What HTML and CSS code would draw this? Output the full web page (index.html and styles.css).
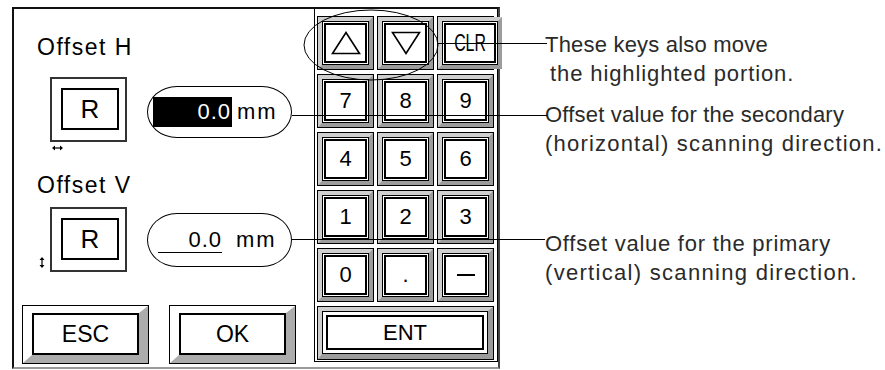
FILE: index.html
```html
<!DOCTYPE html>
<html lang="en">
<head>
  <meta charset="UTF-8" />
  <meta name="viewport" content="width=device-width, initial-scale=1.0"/>
  <title>Offset H / Offset V</title>
  <link rel="stylesheet" href="styles.css">
</head>
<body>
  <div class="figure">
    <div class="panel">
      <div class="settings">
        <div class="group group-h">
          <div class="label">Offset H</div>
          <div class="row">
            <div class="rbox">
              <span class="rface">R</span>
              <svg class="dir dir-h" width="11" height="6" viewBox="0 0 11 6">
                <path d="M2 3H9" stroke="#000" stroke-width="1.2"/>
                <path d="M0 3L3 0.5V5.5Z M11 3L8 0.5V5.5Z" fill="#000"/>
              </svg>
            </div>
            <div class="pill pill-h">
              <span class="field field-active">0.0</span>
              <span class="unit">mm</span>
            </div>
          </div>
        </div>
        <div class="group group-v">
          <div class="label">Offset V</div>
          <div class="row">
            <div class="rbox">
              <span class="rface">R</span>
              <svg class="dir dir-v" width="6" height="11" viewBox="0 0 6 11">
                <path d="M3 2V9" stroke="#000" stroke-width="1.2"/>
                <path d="M3 0L0.5 3H5.5Z M3 11L0.5 8H5.5Z" fill="#000"/>
              </svg>
            </div>
            <div class="pill pill-v">
              <span class="field field-under">0.0</span>
              <span class="unit unit-v">mm</span>
            </div>
          </div>
        </div>
        <div class="actions">
          <div class="btn"><div class="btn-bevel"><span class="btn-face">ESC</span></div></div>
          <div class="btn"><div class="btn-bevel"><span class="btn-face">OK</span></div></div>
        </div>
      </div>

      <div class="keypad">
        <div class="key"><div class="key-bevel"><span class="key-face">
          <svg width="30" height="24" viewBox="0 0 30 24"><polygon points="1.5,22.5 15,1.5 28.5,22.5" fill="none" stroke="#000" stroke-width="1.6"/></svg>
        </span></div></div>
        <div class="key"><div class="key-bevel"><span class="key-face">
          <svg width="30" height="24" viewBox="0 0 30 24"><polygon points="1.5,1.5 28.5,1.5 15,22.5" fill="none" stroke="#000" stroke-width="1.6"/></svg>
        </span></div></div>
        <div class="key"><div class="key-bevel"><span class="key-face"><span class="clr">CLR</span></span></div></div>
        <div class="key"><div class="key-bevel"><span class="key-face">7</span></div></div>
        <div class="key"><div class="key-bevel"><span class="key-face">8</span></div></div>
        <div class="key"><div class="key-bevel"><span class="key-face">9</span></div></div>
        <div class="key"><div class="key-bevel"><span class="key-face">4</span></div></div>
        <div class="key"><div class="key-bevel"><span class="key-face">5</span></div></div>
        <div class="key"><div class="key-bevel"><span class="key-face">6</span></div></div>
        <div class="key"><div class="key-bevel"><span class="key-face">1</span></div></div>
        <div class="key"><div class="key-bevel"><span class="key-face">2</span></div></div>
        <div class="key"><div class="key-bevel"><span class="key-face">3</span></div></div>
        <div class="key"><div class="key-bevel"><span class="key-face">0</span></div></div>
        <div class="key"><div class="key-bevel"><span class="key-face">.</span></div></div>
        <div class="key"><div class="key-bevel"><span class="key-face"><span class="minus"></span></span></div></div>
        <div class="key key-wide"><div class="key-bevel"><span class="key-face">ENT</span></div></div>
      </div>
    </div>

    <div class="notes">
      <p class="note note-keys">
        <span class="line ls-keys1">These keys also move</span>
        <span class="line ls-keys2 indent">the highlighted portion.</span>
      </p>
      <p class="note note-h">
        <span class="line ls-h1">Offset value for the secondary</span>
        <span class="line ls-h2">(horizontal) scanning direction.</span>
      </p>
      <p class="note note-v">
        <span class="line ls-v1">Offset value for the primary</span>
        <span class="line ls-v2">(vertical) scanning direction.</span>
      </p>
    </div>

    <!-- leader lines drawn over the panel -->
    <svg class="leaders" width="885" height="370" viewBox="0 0 885 370">
      <ellipse cx="371" cy="45" rx="67" ry="35" fill="none" stroke="#000" stroke-width="1"/>
      <g stroke="#000" stroke-width="1">
        <line x1="438" y1="43.5" x2="547" y2="43.5"/>
        <line x1="292" y1="115.5" x2="547" y2="115.5"/>
        <line x1="292" y1="239.5" x2="545" y2="239.5"/>
      </g>
    </svg>
  </div>
</body>
</html>
```

FILE: styles.css
```css
body {
  margin: 0;
  background: #fff;
  font-family: "Liberation Sans", Arial, sans-serif;
  color: #000;
}

.figure {
  position: relative;
  width: 885px;
  height: 370px;
  display: flex;
  align-items: flex-start;
}

.panel {
  margin: 7px 0 0 12px;
  width: 488px;
  height: 362px;
  box-sizing: border-box;
  border: 2px solid #111;
  border-bottom-color: #9a9a9a;
  border-right-color: #444;
  display: flex;
  align-items: flex-start;
}

.settings {
  width: 300px;
}

.group {
  padding-left: 23px;
}

.label {
  margin-top: 25px;
  font-size: 23px;
  line-height: 26px;
  letter-spacing: 1.5px;
}

.group-v .label {
  margin-top: 30px;
}

.row {
  display: flex;
  align-items: flex-start;
  margin: 17px 0 0 13px;
}

.group-v .row {
  margin-top: 9px;
}

.rbox {
  position: relative;
  width: 77px;
  height: 65px;
  box-sizing: border-box;
  border: 2px solid #333;
  padding: 9px 6px 10px 9px;
}

.rface {
  display: flex;
  align-items: center;
  justify-content: center;
  height: 100%;
  box-sizing: border-box;
  border: 2px solid #000;
  font-size: 26px;
}

.dir {
  position: absolute;
  display: block;
}

.dir-h {
  left: 0;
  top: 100%;
  margin-top: 5px;
}

.dir-v {
  right: 100%;
  bottom: 2px;
  margin-right: 7px;
}

.pill {
  margin-left: 20px;
  width: 145px;
  height: 52px;
  box-sizing: border-box;
  border: 1px solid #000;
  border-radius: 30px / 26px;
  display: flex;
  align-items: center;
  font-size: 22px;
}

.pill-h {
  margin-top: 9px;
}

.pill-v {
  margin-top: 6px;
  height: 54px;
  border-radius: 30px / 27px;
}

.field {
  box-sizing: border-box;
  text-align: right;
  letter-spacing: 1px;
}

.field-active {
  margin-left: 5px;
  width: 79px;
  height: 30px;
  line-height: 30px;
  padding-right: 1px;
  background: #000;
  color: #fff;
}

.field-under {
  margin-left: 10px;
  width: 64px;
  line-height: 24px;
  border-bottom: 1px solid #000;
}

.unit {
  margin-left: 5px;
  letter-spacing: 2px;
}

.unit-v {
  margin-left: 14px;
}

.actions {
  display: flex;
  gap: 20px;
  margin: 33px 0 0 8px;
}

.btn {
  width: 127px;
  height: 59px;
  box-sizing: border-box;
  border: 1px solid #000;
  display: flex;
}

.btn-bevel {
  flex: 1;
  display: flex;
  border-style: solid;
  border-width: 7px 9px 8px 9px;
  border-color: #fff #acacac #acacac #fff;
}

.btn-face {
  flex: 1;
  display: flex;
  align-items: center;
  justify-content: center;
  border: 2px solid #000;
  font-size: 23px;
}

.keypad {
  width: 184px;
  box-sizing: border-box;
  border: 1px solid #000;
  border-top: 0;
  padding: 7px 3px 1px 2px;
  display: grid;
  grid-template-columns: repeat(3, 57px);
  grid-auto-rows: 54px;
  gap: 4px 3px;
}

.key {
  border: 1px solid #000;
  display: flex;
}

.key-wide {
  grid-column: 1 / 4;
}

.key-bevel {
  flex: 1;
  display: flex;
  border-style: solid;
  border-width: 4px;
  border-color: #cfcfcf #9c9c9c #9c9c9c #cfcfcf;
  padding: 2px;
  background: #fff;
  box-shadow: inset 0 0 0 1px #000;
}

.key-wide .key-bevel {
  border-width: 4px 5px 5px 4px;
  padding: 4px;
}

.key-face {
  flex: 1;
  display: flex;
  align-items: center;
  justify-content: center;
  border: 2px solid #000;
  font-size: 22px;
}

.key-face svg {
  display: block;
}

.clr {
  display: inline-block;
  font-size: 24px;
  transform: scaleX(0.66);
}

.minus {
  width: 18px;
  height: 2px;
  background: #000;
}

.notes {
  margin-left: 45px;
  padding-top: 30px;
  font-size: 22px;
  line-height: 29px;
  color: #2a2a2a;
}

.note {
  margin: 0;
}

.line {
  display: block;
}

.note-h {
  margin-top: 12px;
}

.note-v {
  margin-top: 71px;
}

.indent {
  padding-left: 5px;
}

.ls-keys1 { letter-spacing: 0.2px; }
.ls-keys2 { letter-spacing: 0.9px; }
.ls-h1 { letter-spacing: 0.2px; }
.ls-h2 { letter-spacing: 1.2px; }
.ls-v1 { letter-spacing: 0.75px; }
.ls-v2 { letter-spacing: 1.3px; }

.leaders {
  position: absolute;
  left: 0;
  top: 0;
  pointer-events: none;
}
```
